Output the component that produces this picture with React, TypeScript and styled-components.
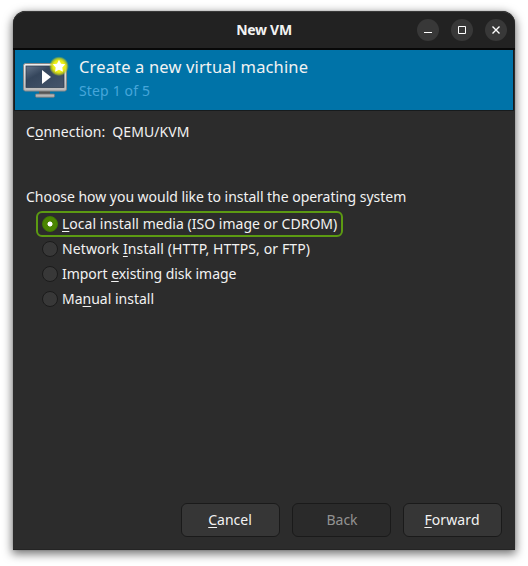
import React from "react";
import styled, { createGlobalStyle } from "styled-components";

const GlobalStyle = createGlobalStyle`
  * { box-sizing: border-box; }
  body {
    margin: 0;
    background: #fff;
    overflow: hidden;
    font-family: "Noto Sans", "Open Sans", sans-serif;
    font-size: 14px;
    color: #f2f2f2;
  }
`;

const Desktop = styled.main`
  width: 528px;
  height: 566px;
  padding: 11px 13px 16px;
`;

const Window = styled.section`
  width: 502px;
  height: 539px;
  display: flex;
  flex-direction: column;
  background: #2c2c2c;
  border-radius: 13px 13px 0 0;
  border-bottom: 1px solid #242424;
  box-shadow: 0 0 1px rgba(0, 0, 0, 0.45), 0 3px 10px 1px rgba(0, 0, 0, 0.55);
`;

const TitleBar = styled.header`
  height: 39px;
  flex: none;
  display: grid;
  grid-template-columns: 1fr auto 1fr;
  align-items: center;
  background: #222;
  border-radius: 13px 13px 0 0;
  border-bottom: 2px solid #080808;
  box-shadow: inset 0 1px 0 #393939;
  padding-right: 8px;
  padding-left: 8px;
`;

const Title = styled.h1`
  grid-column: 2;
  margin: 0;
  font-size: 14px;
  font-weight: 700;
  line-height: 20px;
  letter-spacing: -0.3px;
`;

const Controls = styled.div`
  display: flex;
  justify-content: flex-end;
  gap: 12px;
`;

const ControlButton = styled.button`
  width: 22px;
  height: 22px;
  padding: 0;
  border: 0;
  border-radius: 50%;
  background: #383838;
  color: #fff;
  svg { display: block; }
`;

const Banner = styled.div`
  height: 61px;
  flex: none;
  margin: 0 1px;
  display: flex;
  background: #0073a8;
  border: solid #171b1d;
  border-width: 0 1px 1px;
  padding: 0 0 0 7px;
  gap: 10px;
`;

const BannerText = styled.div`
  padding-top: 4px;
`;

const Label = styled.span<{ $spacing?: number; $size?: number; $color?: string; $leading?: number }>`
  display: block;
  white-space: pre;
  line-height: ${(p) => p.$leading ?? 25}px;
  font-size: ${(p) => p.$size ?? 14}px;
  letter-spacing: ${(p) => p.$spacing ?? 0}px;
  color: ${(p) => p.$color ?? "#f2f2f2"};
`;

const Mnemonic = styled.span`
  text-decoration: underline 1px;
  text-underline-offset: 2px;
  text-decoration-skip-ink: none;
`;

const Body = styled.div`
  flex: 1;
  padding: 8px 13px 0;
`;

const Connection = styled.div`
  display: flex;
  gap: 7px;
  margin-bottom: 40px;
`;

const Options = styled.div`
  display: flex;
  flex-direction: column;
  align-items: flex-start;
  padding: 2px 0 0 10px;
`;

const Option = styled.label<{ $focused?: boolean }>`
  display: flex;
  align-items: center;
  gap: 4px;
  height: 26px;
  margin-bottom: -1px;
  padding: 0 4px;
  border: 2px solid ${(p) => (p.$focused ? "#5c9a12" : "transparent")};
  border-radius: 6px;
  ${Label} { margin-top: -2px; }
`;

const Radio = styled.span<{ $checked?: boolean }>`
  width: 16px;
  height: 16px;
  border-radius: 50%;
  border: 1px solid ${(p) => (p.$checked ? "#3f7c00" : "#1b1b1b")};
  background: ${(p) => (p.$checked ? "radial-gradient(circle, #fff 2.1px, #4b8501 2.9px)" : "#383838")};
`;

const Actions = styled.footer`
  display: flex;
  justify-content: flex-end;
  gap: 12px;
  padding: 0 13px 12px;
`;

const ActionButton = styled.button<{ $muted?: boolean }>`
  width: 99px;
  height: 34px;
  display: flex;
  align-items: center;
  justify-content: center;
  padding: ${(p) => (p.$muted ? "0 0 2px 1px" : "0 1px 2px 0")};
  font-family: inherit;
  border: 1px solid #1a1a1a;
  border-radius: 6px;
  background: ${(p) => (p.$muted ? "#2a2a2a" : "#363636")};
`;

const MachineIcon = () => (
  <svg width="47" height="50" viewBox="0 0 47 50">
    <defs>
      <linearGradient id="frame" x2="0" y2="1">
        <stop offset="0" stopColor="#eee" />
        <stop offset="1" stopColor="#b9b9b9" />
      </linearGradient>
      <linearGradient id="screen" x2="1" y2="1">
        <stop offset="0" stopColor="#65758a" />
        <stop offset=".35" stopColor="#35465c" />
        <stop offset="1" stopColor="#46566c" />
      </linearGradient>
      <radialGradient id="glow">
        <stop offset="0" stopColor="#ffff3c" />
        <stop offset=".6" stopColor="#e8ea10" />
        <stop offset=".8" stopColor="#c9d218" stopOpacity=".75" />
        <stop offset="1" stopColor="#90b540" stopOpacity="0" />
      </radialGradient>
    </defs>
    <path d="M17 40h11v4H17z" fill="#555" />
    <rect x="13.5" y="44" width="19" height="3.2" rx="1" fill="#b5b5b5" stroke="#777" strokeWidth=".8" />
    <rect x="1.5" y="13.5" width="43" height="27.5" rx="2" fill="url(#frame)" stroke="#888" />
    <rect x="4" y="16" width="38" height="21.5" fill="url(#screen)" stroke="#29384a" strokeWidth=".7" />
    <path d="M20 20v14l9-7z" fill="#fff" />
    <circle cx="37" cy="16.3" r="10" fill="url(#glow)" />
    <path d="M37 9.8l2 4 4.3.5-3 3.3.6 4.2-3.9-2-3.9 2 .6-4.2-3-3.3 4.3-.5z" fill="#fff" />
  </svg>
);

export default function App() {
  return (
    <>
      <GlobalStyle />
      <Desktop>
        <Window>
          <TitleBar>
            <Title>New VM</Title>
            <Controls>
              <ControlButton aria-label="Minimize">
                <svg width="22" height="22"><path d="M7 13.5h8" stroke="currentColor" /></svg>
              </ControlButton>
              <ControlButton aria-label="Maximize">
                <svg width="22" height="22"><path d="M7.5 7.5h7v7h-7z" fill="none" stroke="currentColor" /></svg>
              </ControlButton>
              <ControlButton aria-label="Close">
                <svg width="22" height="22"><path d="M7.5 7.5l7 7m0-7l-7 7" stroke="currentColor" strokeWidth="1.4" /></svg>
              </ControlButton>
            </Controls>
          </TitleBar>
          <Banner>
            <MachineIcon />
            <BannerText>
              <Label $size={16.5} $spacing={0.15}>Create a new virtual machine</Label>
              <Label $color="#46a6da" $leading={23} $spacing={0.15}>Step 1 of 5</Label>
            </BannerText>
          </Banner>
          <Body>
            <Connection>
              <Label $spacing={0.04}>C<Mnemonic>o</Mnemonic>nnection:</Label>
              <Label $spacing={0.1}>QEMU/KVM</Label>
            </Connection>
            <Label $spacing={-0.03}>Choose how you would like to install the operating system</Label>
            <Options>
              <Option $focused>
                <Radio $checked />
                <Label $spacing={0.02}><Mnemonic>L</Mnemonic>ocal install media (ISO image or CDROM)</Label>
              </Option>
              <Option>
                <Radio />
                <Label $spacing={0.12}>Network <Mnemonic>I</Mnemonic>nstall (HTTP, HTTPS, or FTP)</Label>
              </Option>
              <Option>
                <Radio />
                <Label $spacing={-0.04}>Import <Mnemonic>e</Mnemonic>xisting disk image</Label>
              </Option>
              <Option>
                <Radio />
                <Label>Ma<Mnemonic>n</Mnemonic>ual install</Label>
              </Option>
            </Options>
          </Body>
          <Actions>
            <ActionButton><Label><Mnemonic>C</Mnemonic>ancel</Label></ActionButton>
            <ActionButton $muted disabled><Label $color="#929292">Back</Label></ActionButton>
            <ActionButton><Label $spacing={0.1}><Mnemonic>F</Mnemonic>orward</Label></ActionButton>
          </Actions>
        </Window>
      </Desktop>
    </>
  );
}
